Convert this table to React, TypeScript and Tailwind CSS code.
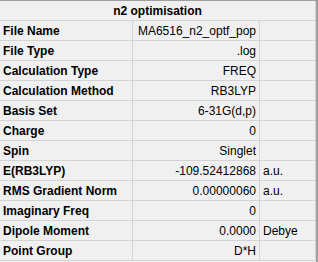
const rows: [string, string, string][] = [
  ["File Name", "MA6516_n2_optf_pop", ""],
  ["File Type", ".log", ""],
  ["Calculation Type", "FREQ", ""],
  ["Calculation Method", "RB3LYP", ""],
  ["Basis Set", "6-31G(d,p)", ""],
  ["Charge", "0", ""],
  ["Spin", "Singlet", ""],
  ["E(RB3LYP)", "-109.52412868", "a.u."],
  ["RMS Gradient Norm", "0.00000060", "a.u."],
  ["Imaginary Freq", "0", ""],
  ["Dipole Moment", "0.0000", "Debye"],
  ["Point Group", "D*H", ""],
];

export default function App() {
  return (
    <div
      className="flex h-[262px] w-[318px] overflow-hidden bg-[#f0f0f0] text-[12px] text-black"
      style={{ fontFamily: '"Liberation Sans", Arial, sans-serif' }}
    >
      <div className="flex w-[316px] flex-col border-t border-[#a0a0a0]">
        {/* title row */}
        <div className="flex h-[20px] items-center justify-center border-b border-r border-[#d4d4d4] font-bold">
          n2 optimisation
        </div>
        {rows.map(([label, value, unit]) => (
          <div
            key={label}
            className="grid h-[20px] grid-cols-[133px_127px_56px] border-b border-[#d4d4d4]"
          >
            <div className="flex items-center border-r border-[#d4d4d4] pl-[3px] font-bold">
              {label}
            </div>
            <div className="flex items-center justify-end border-r border-[#d4d4d4] pr-[3px]">
              {value}
            </div>
            <div className="flex items-center border-r border-[#d4d4d4] pl-[3px]">
              {unit}
            </div>
          </div>
        ))}
      </div>
      {/* right frame edge */}
      <div className="h-full w-[2px] bg-[#a0a0a0]" />
    </div>
  );
}
